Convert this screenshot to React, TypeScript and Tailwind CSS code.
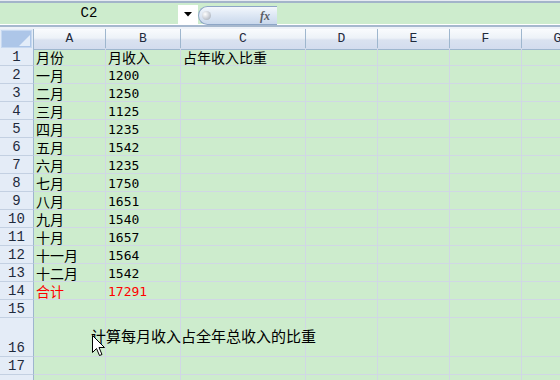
import React from "react";

interface Row {
  n: number;
  a?: string;
  b?: string;
  c?: string;
  red?: boolean;
  tall?: boolean;
}

const cols = ["A", "B", "C", "D", "E", "F", "G"];

const rows: Row[] = [
  { n: 1, a: "月份", b: "月收入", c: "占年收入比重" },
  { n: 2, a: "一月", b: "1200" },
  { n: 3, a: "二月", b: "1250" },
  { n: 4, a: "三月", b: "1125" },
  { n: 5, a: "四月", b: "1235" },
  { n: 6, a: "五月", b: "1542" },
  { n: 7, a: "六月", b: "1235" },
  { n: 8, a: "七月", b: "1750" },
  { n: 9, a: "八月", b: "1651" },
  { n: 10, a: "九月", b: "1540" },
  { n: 11, a: "十月", b: "1657" },
  { n: 12, a: "十一月", b: "1564" },
  { n: 13, a: "十二月", b: "1542" },
  { n: 14, a: "合计", b: "17291", red: true },
  { n: 15 },
  { n: 16, tall: true },
  { n: 17 },
  { n: 18 },
];

const gridCols = "grid grid-cols-[34px_72px_75px_125px_72px_72px_72px_72px]";
const headerBg =
  "bg-[linear-gradient(to_bottom,#f9fbfd_0%,#edf2f8_45%,#dae2f0_55%,#d3dcee_100%)]";

const Cell = ({ text, red }: { text?: string; red?: boolean }) => {
  const isNum = !!text && /^\d+$/.test(text);
  return (
    <div
      className={`flex items-end whitespace-nowrap border-r border-b border-[#d0d7e5] pl-[2px] ${
        red ? "text-[#ff0000]" : "text-black"
      } ${isNum ? "text-[13px] leading-[15px] font-[family-name:'DejaVu_Sans_Mono',monospace]" : "text-[14px] leading-[15px]"}`}
    >
      {text}
    </div>
  );
};

const Cursor = () => (
  <svg width="14" height="23" viewBox="0 0 14 23" className="absolute left-[92px] top-[335px]">
    <polygon
      points="0.5,0.5 0.5,17.5 4.5,13.5 7.5,20.5 10,19.5 7,12.5 12.5,12.5"
      fill="#fff"
      stroke="#000"
      strokeWidth="1"
      strokeLinejoin="miter"
    />
  </svg>
);

export default function App() {
  return (
    <div className="relative w-[560px] h-[380px] overflow-hidden bg-[#cdeccd] font-[family-name:'Noto_Sans_CJK_SC','DejaVu_Sans',sans-serif]">
      {/* top strip */}
      <div className="h-[3px] bg-[#e6ebf2] border-b-2 border-[#a3b4ca]" />

      {/* name box + formula bar */}
      <div className="flex h-[21px] bg-[#cdeccd]">
        <div className="w-[178px] flex items-center justify-center text-[14px] text-black font-[family-name:'Liberation_Mono',monospace]">
          C2
        </div>
        <div className="w-[20px] bg-white flex items-center justify-center mt-[2px]">
          <svg width="8" height="5" viewBox="0 0 8 5">
            <polygon points="0,0 8,0 4,4.5" fill="#000" />
          </svg>
        </div>
        <div className="w-[79px] mt-[3px] h-[19px] rounded-l-full border border-r-0 border-[#8ea6c6] bg-[linear-gradient(to_bottom,#f3f7fc_0%,#dde7f4_50%,#c9d8ec_100%)] flex items-center justify-between pl-[3px] pr-[7px]">
          <div className="w-[9px] h-[9px] rounded-full bg-[radial-gradient(circle_at_35%_35%,#ffffff_0%,#c4c9d1_60%,#9aa3ae_100%)]" />
          <span className="text-[12px] italic font-bold text-[#5a5f67] font-[family-name:'Liberation_Serif',serif] leading-none">
            fx
          </span>
        </div>
      </div>

      {/* separator */}
      <div className="h-[5px] bg-[#eef2f8] border-t border-white">
        <div className="h-[2px] bg-[#a6b8ce]" />
      </div>

      {/* column header */}
      <div className={`${gridCols} h-[19px]`}>
        <div className="border-r border-b border-[#9eb6ce] bg-[#e4ecf7] p-[1px]">
          <div className="relative h-full bg-[#adc6e8] border border-[#c7d9f1]">
            <svg width="11" height="11" viewBox="0 0 11 11" className="absolute right-[1px] bottom-[1px]">
              <polygon points="11,0 11,11 0,11" fill="#e3edf9" />
            </svg>
          </div>
        </div>
        {cols.map((c) => (
          <div
            key={c}
            className={`flex items-center justify-center border-r border-b border-[#9eb6ce] ${headerBg} text-[13px] text-[#1f2a3c] font-[family-name:'Liberation_Mono',monospace]`}
          >
            {c}
          </div>
        ))}
      </div>

      {/* rows */}
      {rows.map((r) => (
        <div key={r.n} className={`${gridCols} ${r.tall ? "h-[39px]" : "h-[18px]"}`}>
          <div
            className={`flex justify-center border-r border-r-[#9eb6ce] border-b border-b-[#c3d0e2] bg-[#e4ecf7] text-[14px] leading-[16px] text-[#1f2a3c] font-[family-name:'Liberation_Mono',monospace] ${
              r.tall ? "items-end" : "items-center"
            }`}
          >
            {r.n < 18 ? r.n : ""}
          </div>
          <Cell text={r.a} red={r.red} />
          <Cell text={r.b} red={r.red} />
          <Cell text={r.c} />
          <Cell />
          <Cell />
          <Cell />
          <Cell />
        </div>
      ))}

      {/* text being typed over the sheet */}
      <div className="absolute left-[91px] top-[327px] text-[15px] leading-[17px] text-black whitespace-nowrap">
        计算每月收入占全年总收入的比重
      </div>
      <Cursor />
    </div>
  );
}
